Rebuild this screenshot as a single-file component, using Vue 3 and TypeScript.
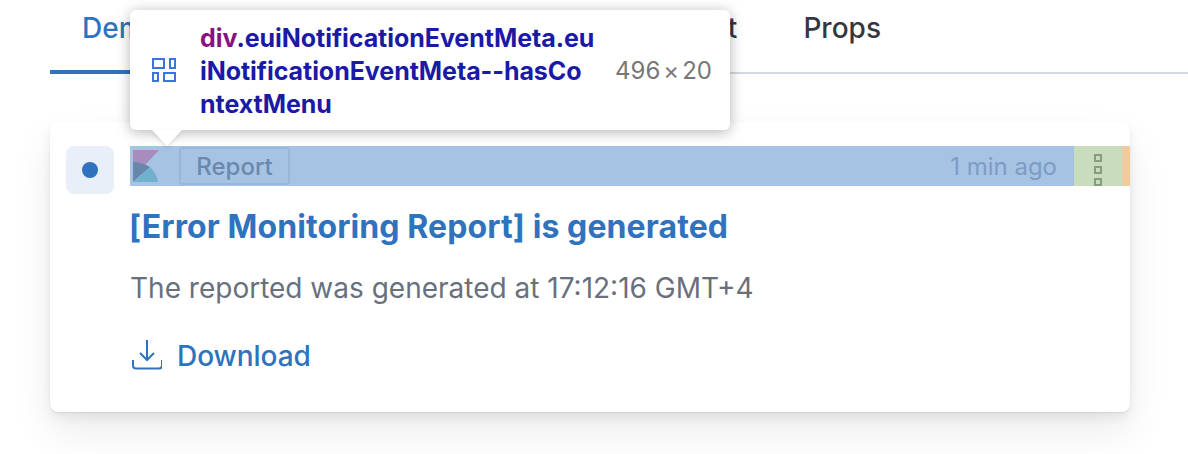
<template>
  <div class="page">
    <div class="tabs">
      <div v-for="tab in tabs" :key="tab" class="tab" :class="{ active: tab === 'Demo' }">{{ tab }}</div>
    </div>

    <div class="card">
      <div class="dot-box"><span class="dot"></span></div>
      <div class="body">
        <div class="meta">
          <div class="meta-main">
            <svg class="logo" width="28" height="34" viewBox="0 0 28 34">
              <path d="M1 1H27L1 29Z" fill="#a78cbd" />
              <path d="M1 13C7 13 13 15 18 18L1 33Z" fill="#6887ad" />
              <path d="M2 33L18 18C22 22 25 27 26 33Z" fill="#70b2cd" />
            </svg>
            <span class="badge">Report</span>
            <span class="time">1 min ago</span>
          </div>
          <div class="meta-menu">
            <i></i><i></i><i></i>
          </div>
          <div class="meta-margin"></div>
        </div>
        <div class="title">[Error Monitoring Report] is generated</div>
        <div class="desc">The reported was generated at 17:12:16 GMT+4</div>
        <div class="download">
          <svg width="32" height="32" viewBox="0 0 32 32" fill="none" stroke="#2f72bd" stroke-width="2">
            <path d="M17 0V20M10 13L17 20L24 13" />
            <path d="M3 20V25.5C3 27.5 4.2 28.5 6 28.5H29C30.8 28.5 32 27.5 32 25.5V20" />
          </svg>
          <span>Download</span>
        </div>
      </div>
    </div>

    <div class="tooltip">
      <svg class="grid-icon" width="24" height="24" viewBox="0 0 24 24" fill="none" stroke="#3b73e0" stroke-width="2">
        <rect x="1" y="1" width="11" height="9" />
        <rect x="18" y="1" width="5" height="9" />
        <rect x="1" y="15" width="5" height="8" />
        <rect x="12" y="15" width="11" height="8" />
      </svg>
      <div class="selector"><span class="tag">div</span>.euiNotificationEventMeta.euiNotificationEventMeta--hasContextMenu</div>
      <div class="size">496<span class="times">×</span>20</div>
      <span class="arrow"></span>
    </div>
  </div>
</template>

<script setup lang="ts">
const tabs: string[] = ['Demo', 'Demo TS', 'Demo JS', 'Snippet', 'Props']
</script>

<style>
body {
  margin: 0;
  background: #fff;
  overflow: hidden;
}
</style>

<style scoped>
.page {
  position: relative;
  height: 454px;
  padding: 0 58px 0 50px;
  box-sizing: border-box;
  font-family: Inter, "Liberation Sans", sans-serif;
  overflow: hidden;
}

.tabs {
  display: flex;
  gap: 2px;
  height: 74px;
  margin-right: -58px;
  box-sizing: border-box;
  border-bottom: 2px solid #d3dae6;
}

.tab {
  padding: 12px 32px 0;
  height: 74px;
  box-sizing: border-box;
  font-size: 28px;
  line-height: 32px;
  font-weight: 500;
  white-space: nowrap;
  color: #343741;
}

.tab:nth-child(2) {
  margin-left: 34px;
}

.tab.active {
  color: #2f72bd;
  border-bottom: 4px solid #2f72bd;
}

.card {
  display: flex;
  gap: 16px;
  margin-top: 48px;
  height: 290px;
  padding: 24px 0 0 16px;
  box-sizing: border-box;
  background: #fff;
  border-radius: 8px;
  box-shadow: 0 1px 2px rgba(0, 0, 0, 0.08), 0 6px 12px rgba(0, 0, 0, 0.06), 0 20px 40px rgba(0, 0, 0, 0.08);
}

.dot-box {
  display: flex;
  align-items: center;
  justify-content: center;
  width: 48px;
  height: 48px;
  flex: none;
  border-radius: 8px;
  background: #e8eff8;
}

.dot {
  width: 16px;
  height: 16px;
  border-radius: 50%;
  background: #2f72bd;
}

.body {
  flex: 1;
  min-width: 0;
}

.meta {
  display: flex;
  height: 40px;
}

.meta-main {
  flex: 1;
  display: flex;
  align-items: center;
  background: #a6c3e3;
  padding-left: 2px;
}

.logo {
  flex: none;
}

.badge {
  margin-left: 19px;
  height: 38px;
  width: 111px;
  box-sizing: border-box;
  display: flex;
  align-items: center;
  justify-content: center;
  border: 2px solid #97b7da;
  border-radius: 4px;
  font-size: 24px;
  font-weight: 500;
  color: #6a89ae;
}

.time {
  margin-left: auto;
  margin-right: 17px;
  font-size: 24px;
  color: #7d9cc4;
}

.meta-menu {
  width: 48px;
  flex: none;
  display: flex;
  flex-direction: column;
  align-items: center;
  gap: 4px;
  padding-top: 8px;
  box-sizing: border-box;
  background: #c9dcbb;
}

.meta-menu i {
  width: 8px;
  height: 8px;
  flex: none;
  box-sizing: border-box;
  border: 2px solid #879e7c;
}

.meta-margin {
  width: 8px;
  flex: none;
  background: #f0cb9f;
}

.title {
  margin-top: 20px;
  margin-left: -1px;
  font-size: 32px;
  line-height: 42px;
  font-weight: 700;
  letter-spacing: 0.1px;
  color: #2f72bd;
}

.desc {
  margin-top: 20px;
  font-size: 28px;
  line-height: 40px;
  color: #69707d;
}

.download {
  display: flex;
  align-items: center;
  gap: 15px;
  margin-top: 31px;
  font-size: 28px;
  letter-spacing: -0.05px;
  font-weight: 500;
  color: #2f72bd;
}

.tooltip {
  position: absolute;
  left: 130px;
  top: 10px;
  width: 600px;
  height: 120px;
  box-sizing: border-box;
  display: flex;
  align-items: center;
  padding: 0 18px 0 22px;
  background: #fff;
  border-radius: 6px;
  box-shadow: 0 2px 14px rgba(0, 0, 0, 0.3);
}

.grid-icon {
  flex: none;
}

.selector {
  width: 396px;
  flex: none;
  margin-left: 24px;
  padding-top: 2px;
  font-size: 25px;
  line-height: 33px;
  font-weight: 700;
  letter-spacing: -0.05px;
  color: #1a1aa6;
  word-break: break-all;
}

.tag {
  color: #881280;
}

.size {
  margin-left: auto;
  font-size: 24px;
  color: #777;
  white-space: nowrap;
}

.times {
  margin: 0 3px;
}

.arrow {
  position: absolute;
  left: 22px;
  bottom: -16px;
  width: 0;
  height: 0;
  border-left: 15px solid transparent;
  border-right: 15px solid transparent;
  border-top: 16px solid #fff;
  filter: drop-shadow(0 2px 2px rgba(0, 0, 0, 0.12));
}
</style>
